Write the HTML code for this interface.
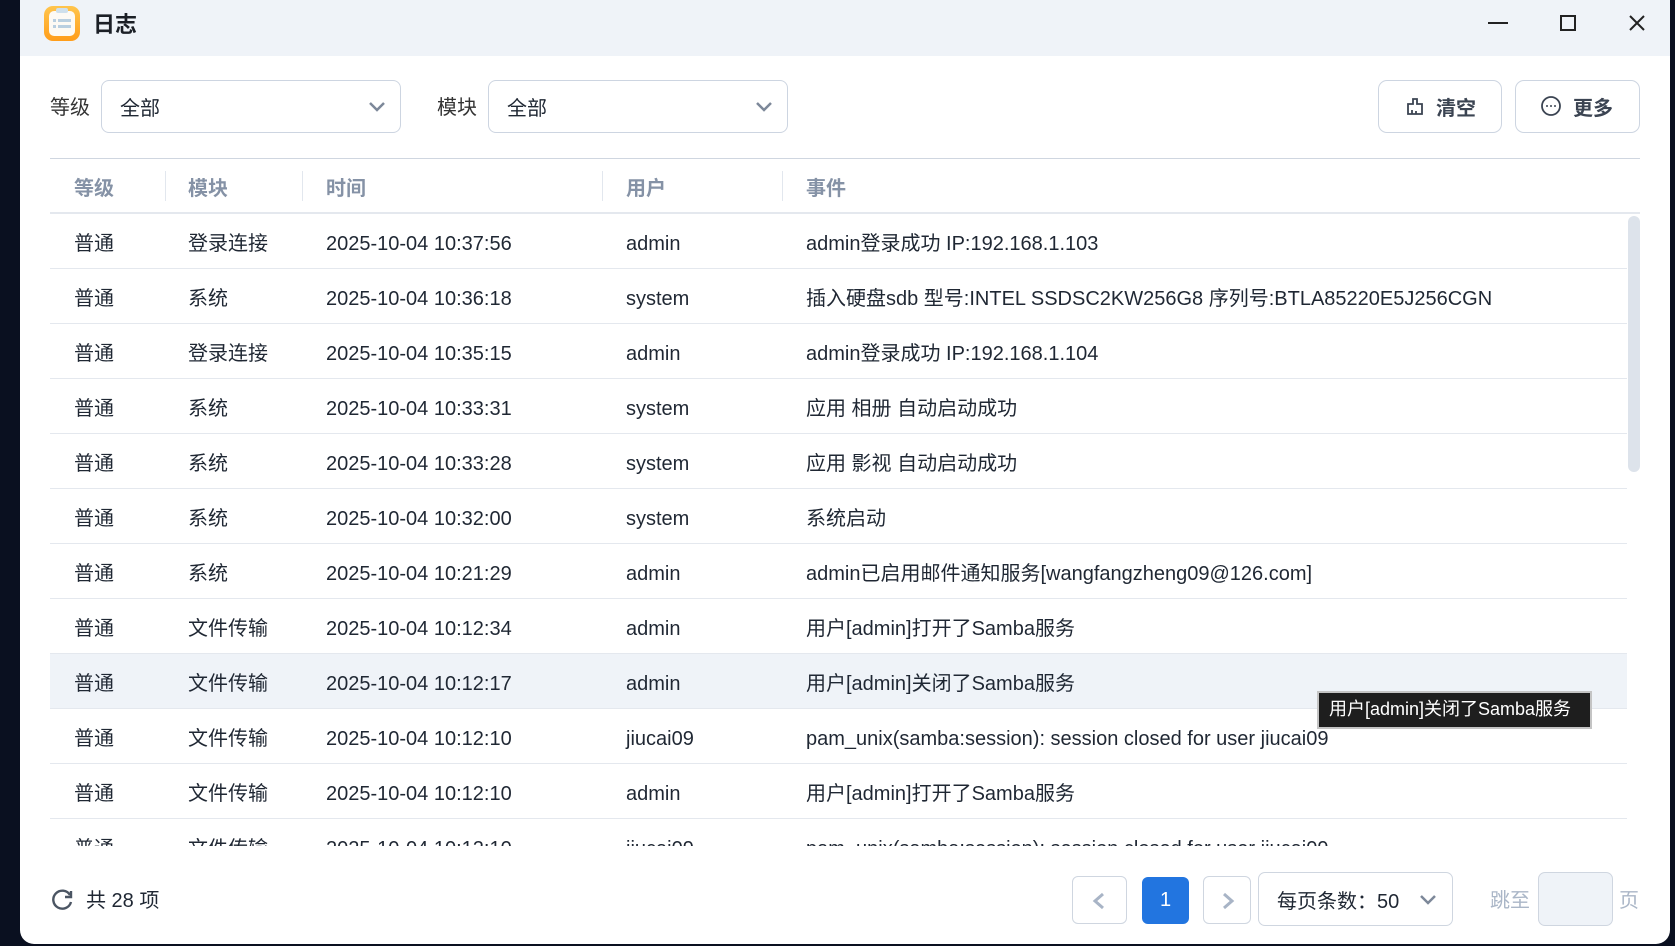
<!DOCTYPE html>
<html><head><meta charset="utf-8"><style>
*{margin:0;padding:0;box-sizing:border-box}
body{width:1675px;height:946px;background:#0a1020;position:relative;overflow:hidden;font-family:"Liberation Sans","Noto Sans CJK SC",sans-serif;color:#1f2733}
.win{position:absolute;left:20px;top:0;width:1650px;height:944px;background:#fff;border-radius:0 0 14px 14px;overflow:hidden}
.tb{position:absolute;left:0;top:0;right:0;height:56px;background:#eff3f8}
.t{position:absolute;font-size:20px;line-height:28px;white-space:nowrap}
.sel{position:absolute;top:80px;height:53px;border:1px solid #cdd5e1;border-radius:8px;background:#fff}
.btn{position:absolute;top:80px;height:53px;border:1px solid #cdd5e1;border-radius:9px;font-weight:bold;font-size:20px;line-height:28px;color:#3b4452}
.hd{position:absolute;top:175px;font-size:20px;line-height:28px;font-weight:bold;color:#8592a6}
.sep{position:absolute;top:171px;width:1px;height:30px;background:#e2e7ee}
.row{position:absolute;left:30px;width:1577px;height:55px;border-bottom:1px solid #e4e8ee}
.row span{position:absolute;top:16px;font-size:20px;line-height:28px;white-space:nowrap}
</style></head><body>
<div class="win">
<div class="tb">
 <div style="position:absolute;left:24px;top:6px;width:36px;height:35px;border-radius:9px;background:linear-gradient(#ffc54d,#ff9d1a)"></div>
 <div style="position:absolute;left:29px;top:11px;width:26px;height:25px;border-radius:5px;background:#fdfaf4"></div>
 <div style="position:absolute;left:36px;top:8px;width:12px;height:5px;border-radius:2px;background:#cfe0ec"></div>
 <div style="position:absolute;left:33px;top:19px;width:3px;height:3px;background:#b9cfe0"></div><div style="position:absolute;left:38px;top:19px;width:13px;height:3px;background:#b9cfe0"></div>
 <div style="position:absolute;left:33px;top:25px;width:3px;height:3px;background:#b9cfe0"></div><div style="position:absolute;left:38px;top:25px;width:13px;height:3px;background:#b9cfe0"></div>
 <div class="t" style="left:73px;top:11px;font-weight:bold;font-size:22px;color:#1b1f26">日志</div>
 <div style="position:absolute;left:1468px;top:22px;width:20px;height:2px;background:#222"></div>
 <div style="position:absolute;left:1540px;top:15px;width:16px;height:16px;border:2px solid #222"></div>
 <svg style="position:absolute;left:1608px;top:14px" width="18" height="18"><path d="M2 2L16 16M16 2L2 16" stroke="#222" stroke-width="2"/></svg>
</div>
<div class="t" style="left:30px;top:94px;color:#333">等级</div>
<div class="sel" style="left:81px;width:300px"><span class="t" style="left:18px;top:14px">全部</span><svg style="position:absolute;right:14px;top:20px" width="18" height="12"><path d="M2 2L9 9L16 2" stroke="#7d8899" stroke-width="2.5" fill="none"/></svg></div>
<div class="t" style="left:417px;top:94px;color:#333">模块</div>
<div class="sel" style="left:468px;width:300px"><span class="t" style="left:18px;top:14px">全部</span><svg style="position:absolute;right:14px;top:20px" width="18" height="12"><path d="M2 2L9 9L16 2" stroke="#7d8899" stroke-width="2.5" fill="none"/></svg></div>
<div class="btn" style="left:1358px;width:124px"><svg style="position:absolute;left:26px;top:16px" width="20" height="20"><path d="M8 2h4v5h5v10H3V7h5z M7 17v-4M11 17v-3" stroke="#3b4452" stroke-width="1.8" fill="none"/></svg><span style="position:absolute;left:57px;top:14px">清空</span></div>
<div class="btn" style="left:1495px;width:125px"><svg style="position:absolute;left:24px;top:14px" width="22" height="22"><circle cx="11" cy="11" r="9" stroke="#3b4452" stroke-width="1.8" fill="none"/><circle cx="7" cy="11" r="1" fill="#3b4452"/><circle cx="11" cy="11" r="1" fill="#3b4452"/><circle cx="15" cy="11" r="1" fill="#3b4452"/></svg><span style="position:absolute;left:57px;top:14px">更多</span></div>
<div style="position:absolute;left:30px;top:158px;width:1590px;height:1px;background:#cfd6e0"></div>
<span class="hd" style="left:54px">等级</span><div class="sep" style="left:145px"></div>
<span class="hd" style="left:168px">模块</span><div class="sep" style="left:282px"></div>
<span class="hd" style="left:306px">时间</span><div class="sep" style="left:582px"></div>
<span class="hd" style="left:606px">用户</span><div class="sep" style="left:762px"></div>
<span class="hd" style="left:786px">事件</span>
<div style="position:absolute;left:30px;top:212px;width:1590px;height:2px;background:#e4e8ee"></div>
<div style="position:absolute;left:0;top:214px;width:1650px;height:632px;overflow:hidden">
<div style="position:absolute;left:1608px;top:2px;width:12px;height:256px;border-radius:6px;background:#dde3eb"></div>
<div class="row" style="top:0"><span style="left:24px">普通</span><span style="left:138px">登录连接</span><span style="left:276px">2025-10-04 10:37:56</span><span style="left:576px">admin</span><span style="left:756px">admin登录成功 IP:192.168.1.103</span></div>
<div class="row" style="top:55px"><span style="left:24px">普通</span><span style="left:138px">系统</span><span style="left:276px">2025-10-04 10:36:18</span><span style="left:576px">system</span><span style="left:756px">插入硬盘sdb 型号:INTEL SSDSC2KW256G8 序列号:BTLA85220E5J256CGN</span></div>
<div class="row" style="top:110px"><span style="left:24px">普通</span><span style="left:138px">登录连接</span><span style="left:276px">2025-10-04 10:35:15</span><span style="left:576px">admin</span><span style="left:756px">admin登录成功 IP:192.168.1.104</span></div>
<div class="row" style="top:165px"><span style="left:24px">普通</span><span style="left:138px">系统</span><span style="left:276px">2025-10-04 10:33:31</span><span style="left:576px">system</span><span style="left:756px">应用 相册 自动启动成功</span></div>
<div class="row" style="top:220px"><span style="left:24px">普通</span><span style="left:138px">系统</span><span style="left:276px">2025-10-04 10:33:28</span><span style="left:576px">system</span><span style="left:756px">应用 影视 自动启动成功</span></div>
<div class="row" style="top:275px"><span style="left:24px">普通</span><span style="left:138px">系统</span><span style="left:276px">2025-10-04 10:32:00</span><span style="left:576px">system</span><span style="left:756px">系统启动</span></div>
<div class="row" style="top:330px"><span style="left:24px">普通</span><span style="left:138px">系统</span><span style="left:276px">2025-10-04 10:21:29</span><span style="left:576px">admin</span><span style="left:756px">admin已启用邮件通知服务[wangfangzheng09@126.com]</span></div>
<div class="row" style="top:385px"><span style="left:24px">普通</span><span style="left:138px">文件传输</span><span style="left:276px">2025-10-04 10:12:34</span><span style="left:576px">admin</span><span style="left:756px">用户[admin]打开了Samba服务</span></div>
<div class="row" style="top:440px;background:#eff3f8"><span style="left:24px">普通</span><span style="left:138px">文件传输</span><span style="left:276px">2025-10-04 10:12:17</span><span style="left:576px">admin</span><span style="left:756px">用户[admin]关闭了Samba服务</span></div>
<div class="row" style="top:495px"><span style="left:24px">普通</span><span style="left:138px">文件传输</span><span style="left:276px">2025-10-04 10:12:10</span><span style="left:576px">jiucai09</span><span style="left:756px">pam_unix(samba:session): session closed for user jiucai09</span></div>
<div class="row" style="top:550px"><span style="left:24px">普通</span><span style="left:138px">文件传输</span><span style="left:276px">2025-10-04 10:12:10</span><span style="left:576px">admin</span><span style="left:756px">用户[admin]打开了Samba服务</span></div>
<div class="row" style="top:605px"><span style="left:24px">普通</span><span style="left:138px">文件传输</span><span style="left:276px">2025-10-04 10:12:10</span><span style="left:576px">jiucai09</span><span style="left:756px">pam_unix(samba:session): session closed for user jiucai09</span></div>
</div>
<div style="position:absolute;left:1297px;top:691px;width:275px;height:38px;background:#1e1e1e;border:2px solid #c4c4c4;color:#fff;font-size:18px;line-height:33px;padding-left:10px;white-space:nowrap">用户[admin]关闭了Samba服务</div>
<svg style="position:absolute;left:31px;top:888px" width="24" height="24"><path d="M19 7A9 9 0 1 0 20 14" stroke="#4b5563" stroke-width="2.4" fill="none"/><path d="M20 3v6h-6" stroke="#4b5563" stroke-width="2.4" fill="none"/></svg>
<div class="t" style="left:66px;top:887px">共 28 项</div>
<div style="position:absolute;left:1052px;top:876px;width:55px;height:48px;border:1px solid #cfd6e0;border-radius:6px"><svg style="position:absolute;left:19px;top:15px" width="14" height="18"><path d="M11 2L3 9L11 16" stroke="#a8b4c6" stroke-width="3" fill="none"/></svg></div>
<div style="position:absolute;left:1122px;top:877px;width:47px;height:47px;background:#2275e0;border-radius:6px;color:#fff;font-size:20px;text-align:center;line-height:47px">1</div>
<div style="position:absolute;left:1183px;top:876px;width:48px;height:48px;border:1px solid #cfd6e0;border-radius:6px"><svg style="position:absolute;left:17px;top:15px" width="14" height="18"><path d="M3 2L11 9L3 16" stroke="#a8b4c6" stroke-width="3" fill="none"/></svg></div>
<div style="position:absolute;left:1238px;top:872px;width:195px;height:54px;border:1px solid #cfd6e0;border-radius:7px"><span class="t" style="left:18px;top:15px">每页条数：50</span><svg style="position:absolute;left:160px;top:21px" width="18" height="12"><path d="M2 2L9 9L16 2" stroke="#7d8899" stroke-width="2.5" fill="none"/></svg></div>
<div class="t" style="left:1470px;top:887px;color:#aab6c7">跳至</div>
<div style="position:absolute;left:1518px;top:872px;width:75px;height:54px;background:#eff3f8;border:1px solid #cfd6e0;border-radius:7px"></div>
<div class="t" style="left:1599px;top:887px;color:#aab6c7">页</div>
</div>
</body></html>
